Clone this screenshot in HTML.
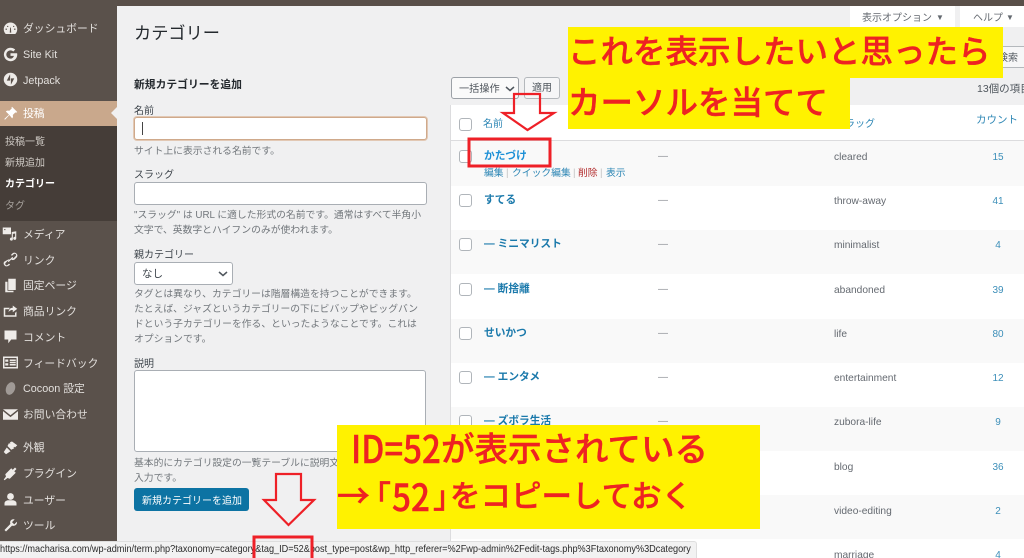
<!DOCTYPE html>
<html lang="ja"><head><meta charset="utf-8"><title>カテゴリー</title>
<style>
*{box-sizing:border-box}
html,body{margin:0;padding:0;width:1024px;height:558px;overflow:hidden;background:#f0f0f1}
body{position:relative;font-family:"Liberation Sans","Noto Sans CJK JP",sans-serif;font-size:11px;color:#50575e}
.a{position:absolute;white-space:nowrap;line-height:1.2}
.m{color:#e2dfdc;font-size:10.8px;left:23px;margin-top:1px}
.s{color:#cfcac5;font-size:10px;left:5px}
.ic{position:absolute;left:3px;width:15px;height:15px;fill:#eeebe8}
.h{color:#72777c;font-size:9.8px;left:134px;margin-top:1px}
.l{color:#3c434a;font-size:10px;left:134px;margin-top:2px}
.row{position:absolute;left:451px;width:573px;height:44px}
.cb{position:absolute;left:459px;width:13px;height:13px;border:1px solid #b0b5ba;border-radius:3px;background:#fff}
.n{color:#1a79ab;font-weight:bold;font-size:10.7px;left:484px;margin-top:1px}
.d{color:#8c8f94;font-size:10px;left:658px;margin-top:1px}
.g{color:#646970;font-size:10.2px;left:834px;margin-top:2px}
.c{color:#3d8fb9;font-size:10px;width:40px;left:978px;text-align:center;margin-top:2px}
.in{position:absolute;background:#fff;border:1px solid #a9aeb4;border-radius:3px}
.y{position:absolute;background:#fff200}
.r{color:#ee2222;font-family:"Noto Sans CJK JP",sans-serif;font-weight:500;line-height:1;-webkit-text-stroke:.4px #ee2222}
.ac{font-size:9.8px;color:#2e87b5;top:168px}
</style></head><body>

<div style="position:absolute;left:0;top:0;width:1024px;height:6px;background:#594f49"></div>
<div style="position:absolute;left:0;top:0;width:117px;height:541px;background:#5a514b"></div>
<div style="position:absolute;left:0;top:101px;width:117px;height:25px;background:#c9a88c"></div>
<div style="position:absolute;left:0;top:126px;width:117px;height:95px;background:#453d38"></div>
<div style="position:absolute;left:111px;top:107px;border:6px solid transparent;border-right-color:#f0f0f1;border-left:0"></div>

<svg class="ic" style="top:21px" viewBox="0 0 20 20"><path d="M10 2a9 9 0 0 0-9 9c0 2.500 1 4.700 2.600 6.300h12.800A9 9 0 0 0 19 11a9 9 0 0 0-9-9zM5 12H3.500v-2H5zm2-4H5.500V6.500H7zm4 7.500H9L9.500 9l1-.5zM15 8h-1.500V6.500H15zm1.500 4H15v-2h1.500z"/></svg>
<svg class="ic" style="top:47px" viewBox="0 0 20 20"><path d="M17.800 8.300H10v3.500h4.500C14 14 12.200 15.500 10 15.500A5.500 5.500 0 1 1 13.700 6l2.600-2.600A9 9 0 1 0 10 19c5 0 9-3.600 9-9 0-.6-.1-1.200-.2-1.700z"/></svg>
<svg class="ic" style="top:72px" viewBox="0 0 20 20"><path d="M10 1a9 9 0 1 0 0 18 9 9 0 0 0 0-18zM9.500 11.500H5L9.500 3zm1 5.500V8.500H15z"/></svg>
<svg class="ic" style="top:106px;fill:#fff" viewBox="0 0 20 20"><path d="M12 1l7 7-1.500 1-1-.5-3.500 3.500c.7 2 .2 3.500-.8 4.500L8.500 12 3 18l-1 0 0-1 6-5.500-4.200-4.200c1-1 2.500-1.500 4.500-.8L11.800 3 11.300 2z"/></svg>
<svg class="ic" style="top:226px;left:2px" viewBox="0 0 20 20"><path d="M1 2h11v9H1zm2 2v1.500h1.500V4zm5.500 0v5L5 6.500zM13 8l6-1v9.500a2 2 0 1 1-1.500-2V10l-3 .5v7a2 2 0 1 1-1.500-2z"/></svg>
<svg class="ic" style="top:252px" viewBox="0 0 20 20"><path d="M13 1.500a4 4 0 0 1 5.500 5.500l-3 3a4 4 0 0 1-5-.5l1.500-1.500c.8.700 1.700.7 2.400 0l2.500-2.500a1.800 1.800 0 0 0-2.600-2.600L12 5 10.500 4zM7 10a4 4 0 0 1 3 .5L8.500 12c-.8-.7-1.700-.7-2.400 0l-2.500 2.500a1.800 1.800 0 0 0 2.600 2.600L8 15.500 9.500 17l-2.500 1.500A4 4 0 0 1 1.500 13zM6.500 12.500l6-6 1 1-6 6z"/></svg>
<svg class="ic" style="top:278px" viewBox="0 0 20 20"><path d="M7 1h10v15H7z"/><path d="M3 5h3v12h8v2H3z"/></svg>
<svg class="ic" style="top:304px" viewBox="0 0 20 20"><path d="M1 5h8L8 7H3v8h13v-3l2-2v7H1zM13 2l6 4.500L13 11V8c-3 0-4.500 1-5.500 3 0-4 2.500-6 5.500-6z"/></svg>
<svg class="ic" style="top:329px" viewBox="0 0 20 20"><path d="M2 2h16v12h-7l-4 5v-5H2z"/></svg>
<svg class="ic" style="top:355px" viewBox="0 0 20 20"><path d="M0 2h20v16H0zm2 2v12h16V4zm1 2h4v3H3zm0 5h4v3H3zm6-5h8v2H9zm0 3h8v2H9zm0 3h8v2H9z" fill-rule="evenodd"/></svg>
<div style="position:absolute;left:6px;top:382px;width:9px;height:13px;background:#a09a96;border-radius:50%;transform:rotate(20deg)"></div>
<svg class="ic" style="top:407px" viewBox="0 0 20 20"><path d="M0 3h20L10 11zM0 5.500l10 8 10-8V17H0z"/></svg>
<svg class="ic" style="top:440px" viewBox="0 0 20 20"><path d="M12 2l7 5-3 3-1-1-1 1 1 1-4 2-5-5 2-4 1 1 1-1-1-1zM5 10l5 5-6 4-3-3z"/></svg>
<svg class="ic" style="top:466px" viewBox="0 0 20 20"><path d="M11 3l2 2 3-3 2 2-3 3 2 2-8 8-3-1-4 3-1-1 3-4-1-3z"/></svg>
<svg class="ic" style="top:492px" viewBox="0 0 20 20"><circle cx="10" cy="6" r="4.500"/><path d="M2 18v-3c0-2.500 3-4 5-4h6c2 0 5 1.500 5 4v3z"/></svg>
<svg class="ic" style="top:518px" viewBox="0 0 20 20"><path d="M18.500 5l-3.500 3.500-3-3L15.500 2c-3-1-6 1-6 4 0 .7.100 1.300.4 1.900L2 16l2 2 8.100-7.900c3.400 1.400 7.400-1.500 6.400-5.100z"/></svg>

<div class="a m" style="top:22px">ダッシュボード</div>
<div class="a m" style="top:48px">Site Kit</div>
<div class="a m" style="top:74px">Jetpack</div>
<div class="a m" style="top:107px;color:#fff">投稿</div>
<div class="a s" style="top:137px">投稿一覧</div>
<div class="a s" style="top:158px">新規追加</div>
<div class="a s" style="top:179px;color:#fff;font-weight:bold">カテゴリー</div>
<div class="a s" style="top:201px;color:#a5a09b">タグ</div>
<div class="a m" style="top:228px">メディア</div>
<div class="a m" style="top:254px">リンク</div>
<div class="a m" style="top:279px">固定ページ</div>
<div class="a m" style="top:305px">商品リンク</div>
<div class="a m" style="top:331px">コメント</div>
<div class="a m" style="top:357px">フィードバック</div>
<div class="a m" style="top:382px">Cocoon 設定</div>
<div class="a m" style="top:408px">お問い合わせ</div>
<div class="a m" style="top:441px">外観</div>
<div class="a m" style="top:467px">プラグイン</div>
<div class="a m" style="top:494px">ユーザー</div>
<div class="a m" style="top:519px">ツール</div>

<div style="position:absolute;left:850px;top:6px;width:105px;height:21px;background:#fff"></div>
<div style="position:absolute;left:960px;top:6px;width:64px;height:21px;background:#fff"></div>
<div class="a" style="left:862px;top:13px;font-size:10px;color:#646970">表示オプション</div>
<div class="a" style="left:936px;top:13px;font-size:8px;color:#646970">▼</div>
<div class="a" style="left:973px;top:13px;font-size:10px;color:#646970">ヘルプ</div>
<div class="a" style="left:1006px;top:13px;font-size:8px;color:#646970">▼</div>
<div class="a" style="left:134px;top:23px;font-size:17.2px;color:#23282d">カテゴリー</div>

<div class="a" style="left:134px;top:79px;font-size:10.8px;font-weight:bold;color:#23282d">新規カテゴリーを追加</div>
<div class="a l" style="top:104px">名前</div>
<div class="in" style="left:134px;top:117px;width:293px;height:23px;border-color:#cfa98b;box-shadow:0 0 0 1px #e2c8b4"></div>
<div style="position:absolute;left:142px;top:122px;width:1px;height:13px;background:#444"></div>
<div class="a h" style="top:145px">サイト上に表示される名前です。</div>
<div class="a l" style="top:168px">スラッグ</div>
<div class="in" style="left:134px;top:182px;width:293px;height:23px"></div>
<div class="a h" style="top:207px;line-height:15px">"スラッグ" は URL に適した形式の名前です。通常はすべて半角小<br>文字で、英数字とハイフンのみが使われます。</div>
<div class="a l" style="top:248px">親カテゴリー</div>
<div class="in" style="left:134px;top:262px;width:99px;height:23px"></div>
<div class="a" style="left:142px;top:268px;font-size:10.5px;color:#3c434a">なし</div>
<svg style="position:absolute;left:218px;top:271px" width="10" height="6" viewBox="0 0 10 6"><path d="M1 1l4 3.500L9 1" fill="none" stroke="#50575e" stroke-width="1.500"/></svg>
<div class="a h" style="top:286px;line-height:15px">タグとは異なり、カテゴリーは階層構造を持つことができます。<br>たとえば、ジャズというカテゴリーの下にビバップやビッグバン<br>ドという子カテゴリーを作る、といったようなことです。これは<br>オプションです。</div>
<div class="a l" style="top:357px">説明</div>
<div class="in" style="left:134px;top:370px;width:292px;height:82px"></div>
<div class="a h" style="top:455px;line-height:15px">基本的にカテゴリ設定の一覧テーブルに説明文を<br>入力です。</div>
<div style="position:absolute;left:134px;top:488px;width:115px;height:23px;background:#0d73a3;border-radius:3px"></div>
<div class="a" style="left:142px;top:496px;font-size:10px;color:#fff">新規カテゴリーを追加</div>

<div class="in" style="left:451px;top:77px;width:68px;height:22px;border-color:#9ca1a7;background:#fafafa"></div>
<div class="a" style="left:459px;top:84px;font-size:10.2px;color:#50575e">一括操作</div>
<svg style="position:absolute;left:505px;top:86px" width="10" height="6" viewBox="0 0 10 6"><path d="M1 1l4 3.500L9 1" fill="none" stroke="#50575e" stroke-width="1.500"/></svg>
<div class="in" style="left:524px;top:77px;width:36px;height:22px;border-color:#b4b8bc;background:#f6f6f7"></div>
<div class="a" style="left:532px;top:83px;font-size:10px;color:#50575e">適用</div>
<div class="in" style="left:990px;top:46px;width:40px;height:22px;border-color:#b4b8bc;background:#f6f6f7"></div>
<div class="a" style="left:998px;top:53px;font-size:10px;color:#50575e">検索</div>
<div class="a" style="left:977px;top:83px;font-size:10.5px;color:#50575e">13個の項目</div>

<div style="position:absolute;left:451px;top:105px;width:573px;height:36px;background:#fff;border-bottom:1px solid #dcdcde"></div>
<div class="row" style="top:141px;height:45px;background:#f9f9f9"></div>
<div class="row" style="top:186px;background:#fff"></div>
<div class="row" style="top:230px;background:#f9f9f9"></div>
<div class="row" style="top:274px;height:45px;background:#fff"></div>
<div class="row" style="top:319px;background:#f9f9f9"></div>
<div class="row" style="top:363px;background:#fff"></div>
<div class="row" style="top:407px;background:#f9f9f9"></div>
<div class="row" style="top:451px;background:#fff"></div>
<div class="row" style="top:495px;background:#f9f9f9"></div>
<div class="row" style="top:539px;background:#fff;height:19px"></div>
<div style="position:absolute;left:450px;top:105px;width:1px;height:453px;background:#dcdcde"></div>

<div class="cb" style="top:118px"></div>
<div class="a" style="left:483px;top:119px;font-size:10px;color:#2e87b5">名前</div>
<div class="a" style="left:845px;top:119px;font-size:10px;color:#2e87b5">ラッグ</div>
<div class="a" style="left:976px;top:114px;font-size:10.5px;color:#2e87b5">カウント</div>

<div class="cb" style="top:150px"></div><div class="a n" style="top:149px;color:#1b8fd6">かたづけ</div><div class="a d" style="top:150px">—</div><div class="a g" style="top:150px">cleared</div><div class="a c" style="top:150px">15</div>
<div class="a ac" style="left:484px">編集</div><div class="a ac" style="left:506px;color:#c4c4c4">|</div><div class="a ac" style="left:512px">クイック編集</div><div class="a ac" style="left:573px;color:#c4c4c4">|</div><div class="a ac" style="left:578px;color:#b32d2e">削除</div><div class="a ac" style="left:600px;color:#c4c4c4">|</div><div class="a ac" style="left:606px">表示</div>
<div class="cb" style="top:194px"></div><div class="a n" style="top:193px">すてる</div><div class="a d" style="top:194px">—</div><div class="a g" style="top:194px">throw-away</div><div class="a c" style="top:194px">41</div>
<div class="cb" style="top:238px"></div><div class="a n" style="top:237px">— ミニマリスト</div><div class="a d" style="top:238px">—</div><div class="a g" style="top:238px">minimalist</div><div class="a c" style="top:238px">4</div>
<div class="cb" style="top:283px"></div><div class="a n" style="top:282px">— 断捨離</div><div class="a d" style="top:283px">—</div><div class="a g" style="top:283px">abandoned</div><div class="a c" style="top:283px">39</div>
<div class="cb" style="top:327px"></div><div class="a n" style="top:326px">せいかつ</div><div class="a d" style="top:327px">—</div><div class="a g" style="top:327px">life</div><div class="a c" style="top:327px">80</div>
<div class="cb" style="top:371px"></div><div class="a n" style="top:370px">— エンタメ</div><div class="a d" style="top:371px">—</div><div class="a g" style="top:371px">entertainment</div><div class="a c" style="top:371px">12</div>
<div class="cb" style="top:415px"></div><div class="a n" style="top:414px">— ズボラ生活</div><div class="a d" style="top:415px">—</div><div class="a g" style="top:415px">zubora-life</div><div class="a c" style="top:415px">9</div>
<div class="a g" style="top:460px">blog</div><div class="a c" style="top:460px">36</div>
<div class="a g" style="top:504px">video-editing</div><div class="a c" style="top:504px">2</div>
<div class="a g" style="top:548px">marriage</div><div class="a c" style="top:548px">4</div>

<div style="position:absolute;left:0;top:541px;width:697px;height:17px;background:#f2f2f2;border:1px solid #dedede;border-left:0;border-bottom:0;border-radius:0 3px 0 0"></div>
<div class="a" style="left:0;top:544px;font-size:10.2px;color:#2b2b2b;transform-origin:left center;transform:scaleX(.897)">https://macharisa.com/wp-admin/term.php?taxonomy=category&amp;tag_ID=52&amp;post_type=post&amp;wp_http_referer=%2Fwp-admin%2Fedit-tags.php%3Ftaxonomy%3Dcategory</div>

<div class="y" style="left:568px;top:27px;width:435px;height:51px"></div>
<div class="y" style="left:568px;top:78px;width:282px;height:51px"></div>
<div class="a r" style="left:568px;top:34px;font-size:32.5px">これを表示したいと思ったら</div>
<div class="a r" style="left:568px;top:85px;font-size:32.5px">カーソルを当てて</div>
<div class="y" style="left:337px;top:425px;width:423px;height:104px"></div>
<div class="a r" style="left:351px;top:428px;font-size:38px;transform-origin:left center;transform:scaleX(.87)">ID=52</div>
<div class="a r" style="left:441px;top:430px;font-size:33.5px">が表示されている</div>
<div class="a r" style="left:337px;top:478px;font-size:33px">→</div>
<div class="a r" style="left:360px;top:479px;font-size:31px">「</div>
<div class="a r" style="left:392px;top:477px;font-size:37px;transform-origin:left center;transform:scaleX(.9)">52</div>
<div class="a r" style="left:433px;top:479px;font-size:31px">」</div>
<div class="a r" style="left:450px;top:479px;font-size:30.5px">をコピーしておく</div>

<svg style="position:absolute;left:0;top:0" width="1024" height="558" viewBox="0 0 1024 558" fill="none" stroke="#ee2027" stroke-width="3">
<path d="M514 94H540V113H554L527.500 130L503 113H514Z" stroke-width="2.200"/>
<rect x="469" y="139" width="81" height="27"/>
<path d="M276 474H301V500H314L288.500 525L264 500H276Z" stroke-width="2.200"/>
<path d="M254 558V537H312V558"/>
</svg>
</body></html>
